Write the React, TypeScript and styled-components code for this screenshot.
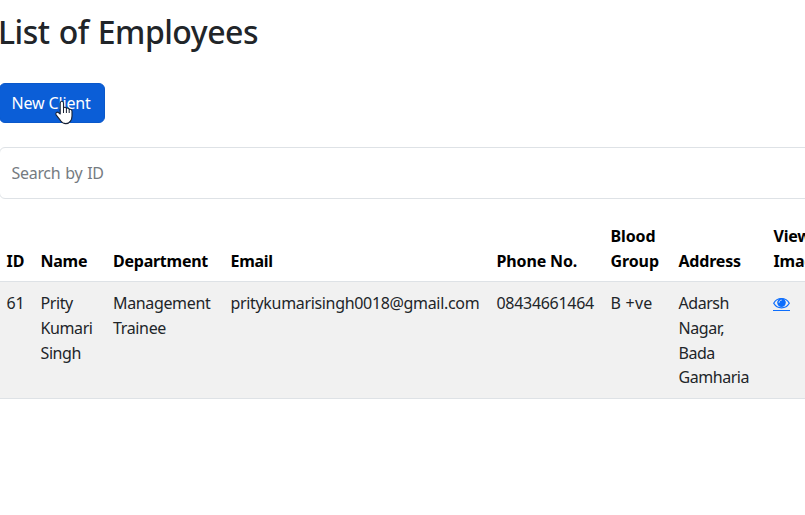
import React from "react";
import styled, { createGlobalStyle } from "styled-components";

const GlobalStyle = createGlobalStyle`
  *, *::before, *::after { box-sizing: border-box; }
  html, body { margin: 0; height: 100%; overflow: hidden; background: #fff; }
  body {
    font-family: "Noto Sans", "Open Sans", sans-serif;
    font-size: 16px;
    line-height: 24.8px;
    color: #212529;
  }
`;

const Page = styled.main`
  width: 850px;
  margin-left: -1px;
  padding-top: 12px;
`;

const Title = styled.h1`
  margin: 0 0 31px -1px;
  font-size: 32px;
  font-weight: 500;
  line-height: 40px;
  letter-spacing: -0.5px;
  word-spacing: 1.3px;
`;

const NewButton = styled.button`
  position: relative;
  display: block;
  width: 106px;
  height: 40px;
  padding: 0 0 0 11.5px;
  border: 1px solid #0a58ca;
  border-radius: 6px;
  background: #0b5ed7;
  color: #fff;
  font: inherit;
  letter-spacing: -0.15px;
  text-align: left;
  white-space: nowrap;
`;

const Pointer = styled.svg`
  position: absolute;
  left: 54px;
  top: 15px;
  width: 20px;
  height: 26px;
`;

const Search = styled.input`
  display: block;
  width: 100%;
  height: 52px;
  margin: 24px 0 16px;
  padding: 0 11.5px;
  border: 1px solid #dee2e6;
  border-radius: 6px;
  background: #fff;
  font: inherit;
  letter-spacing: -0.3px;
  word-spacing: 1px;
  outline: none;
  &::placeholder { color: #757b81; opacity: 1; }
`;

const Table = styled.table`
  width: 850px;
  margin-left: -1px;
  table-layout: fixed;
  border-collapse: separate;
  border-spacing: 0;
`;

const Column = styled.col<{ $width: number }>`
  width: ${(p) => p.$width}px;
`;

const HeadCell = styled.th<{ $track?: number }>`
  height: 67px;
  padding: 8px 0 7px 8.5px;
  border-bottom: 1px solid #dee2e6;
  color: #000;
  font-weight: 700;
  text-align: left;
  vertical-align: bottom;
  white-space: pre;
  letter-spacing: ${(p) => p.$track ?? 0}px;
`;

const Cell = styled.td<{ $track?: number }>`
  height: 117px;
  padding: 9px 0 8px 8.5px;
  border-bottom: 1px solid #dee2e6;
  background: #f1f1f1;
  vertical-align: top;
  white-space: pre;
  letter-spacing: ${(p) => p.$track ?? 0}px;
`;

const ViewLink = styled.a`
  display: block;
  width: 17px;
  height: 17px;
  border-bottom: 1px solid #0d6efd;
  margin: 3px 0 0 -1px;
  color: #0d6efd;
`;

const EyeSvg = styled.svg`
  display: block;
  width: 17px;
  height: 16px;
  padding-top: 2px;
`;

const columns = [
  { title: "ID", width: 34, head: 0, body: -0.1 },
  { title: "Name", width: 72.5, head: -0.25, body: -0.4 },
  { title: "Department", width: 117.5, head: -0.25, body: -0.35 },
  { title: "Email", width: 266, head: -0.3, body: -0.33 },
  { title: "Phone No.", width: 114, head: -0.15, body: -0.3 },
  { title: "Blood\nGroup", width: 68, head: -0.1, body: 0.25 },
  { title: "Address", width: 95, head: -0.2, body: -0.45 },
  { title: "View\nImage", width: 83, head: -0.2, body: 0 },
];

const employee = [
  "61",
  "Prity\nKumari\nSingh",
  "Management\nTrainee",
  "pritykumarisingh0018@gmail.com",
  "08434661464",
  "B +ve",
  "Adarsh\nNagar,\nBada\nGamharia",
];

function HandPointer() {
  return (
    <Pointer viewBox="0 0 20 26" aria-hidden="true">
      <path
        d="M6.2 15V4.2C6.2 1.5 9.5 1.5 9.5 4.2V9C10.2 7.8 12.2 8.1 12.4 9.5C13.3 8.6 15 9.1 15.2 10.5C16.4 9.8 18 10.5 18 12.2V17C18 20.5 16 24.6 11.8 24.6C8.7 24.6 7.6 23.2 6.6 21.7L2.3 16.1C.8 14 3.1 12.3 4.8 13.8Z"
        fill="#fff"
        stroke="#172033"
        strokeWidth="1.1"
        strokeLinejoin="round"
      />
      <path d="M9.5 8.5V14M12.4 9.5V14M15.2 10.5V14" fill="none" stroke="#172033" strokeWidth="1" />
    </Pointer>
  );
}

function Eye() {
  return (
    <EyeSvg viewBox="0 0 17 14" aria-hidden="true">
      <path d="M.7 7.2C4.2 .9 12.8 .9 16.3 7.2C12.8 13.3 4.2 13.3 .7 7.2Z" fill="none" stroke="currentColor" strokeWidth="1.2" />
      <circle cx="8.5" cy="6.6" r="4.3" fill="currentColor" />
      <path d="M6.1 6.4C6.2 5 7 4.3 8.3 4.2" fill="none" stroke="#f1f1f1" strokeWidth=".9" strokeLinecap="round" />
    </EyeSvg>
  );
}

export default function App() {
  return (
    <>
      <GlobalStyle />
      <Page>
        <Title>List of Employees</Title>
        <NewButton>
          New Client
          <HandPointer />
        </NewButton>
        <Search placeholder="Search by ID" />
        <Table>
          <colgroup>
            {columns.map((c) => <Column key={c.title} $width={c.width} />)}
          </colgroup>
          <thead>
            <tr>
              {columns.map((c) => <HeadCell key={c.title} $track={c.head}>{c.title}</HeadCell>)}
            </tr>
          </thead>
          <tbody>
            <tr>
              {employee.map((value, i) => <Cell key={value} $track={columns[i].body}>{value}</Cell>)}
              <Cell>
                <ViewLink aria-label="View image"><Eye /></ViewLink>
              </Cell>
            </tr>
          </tbody>
        </Table>
      </Page>
    </>
  );
}
